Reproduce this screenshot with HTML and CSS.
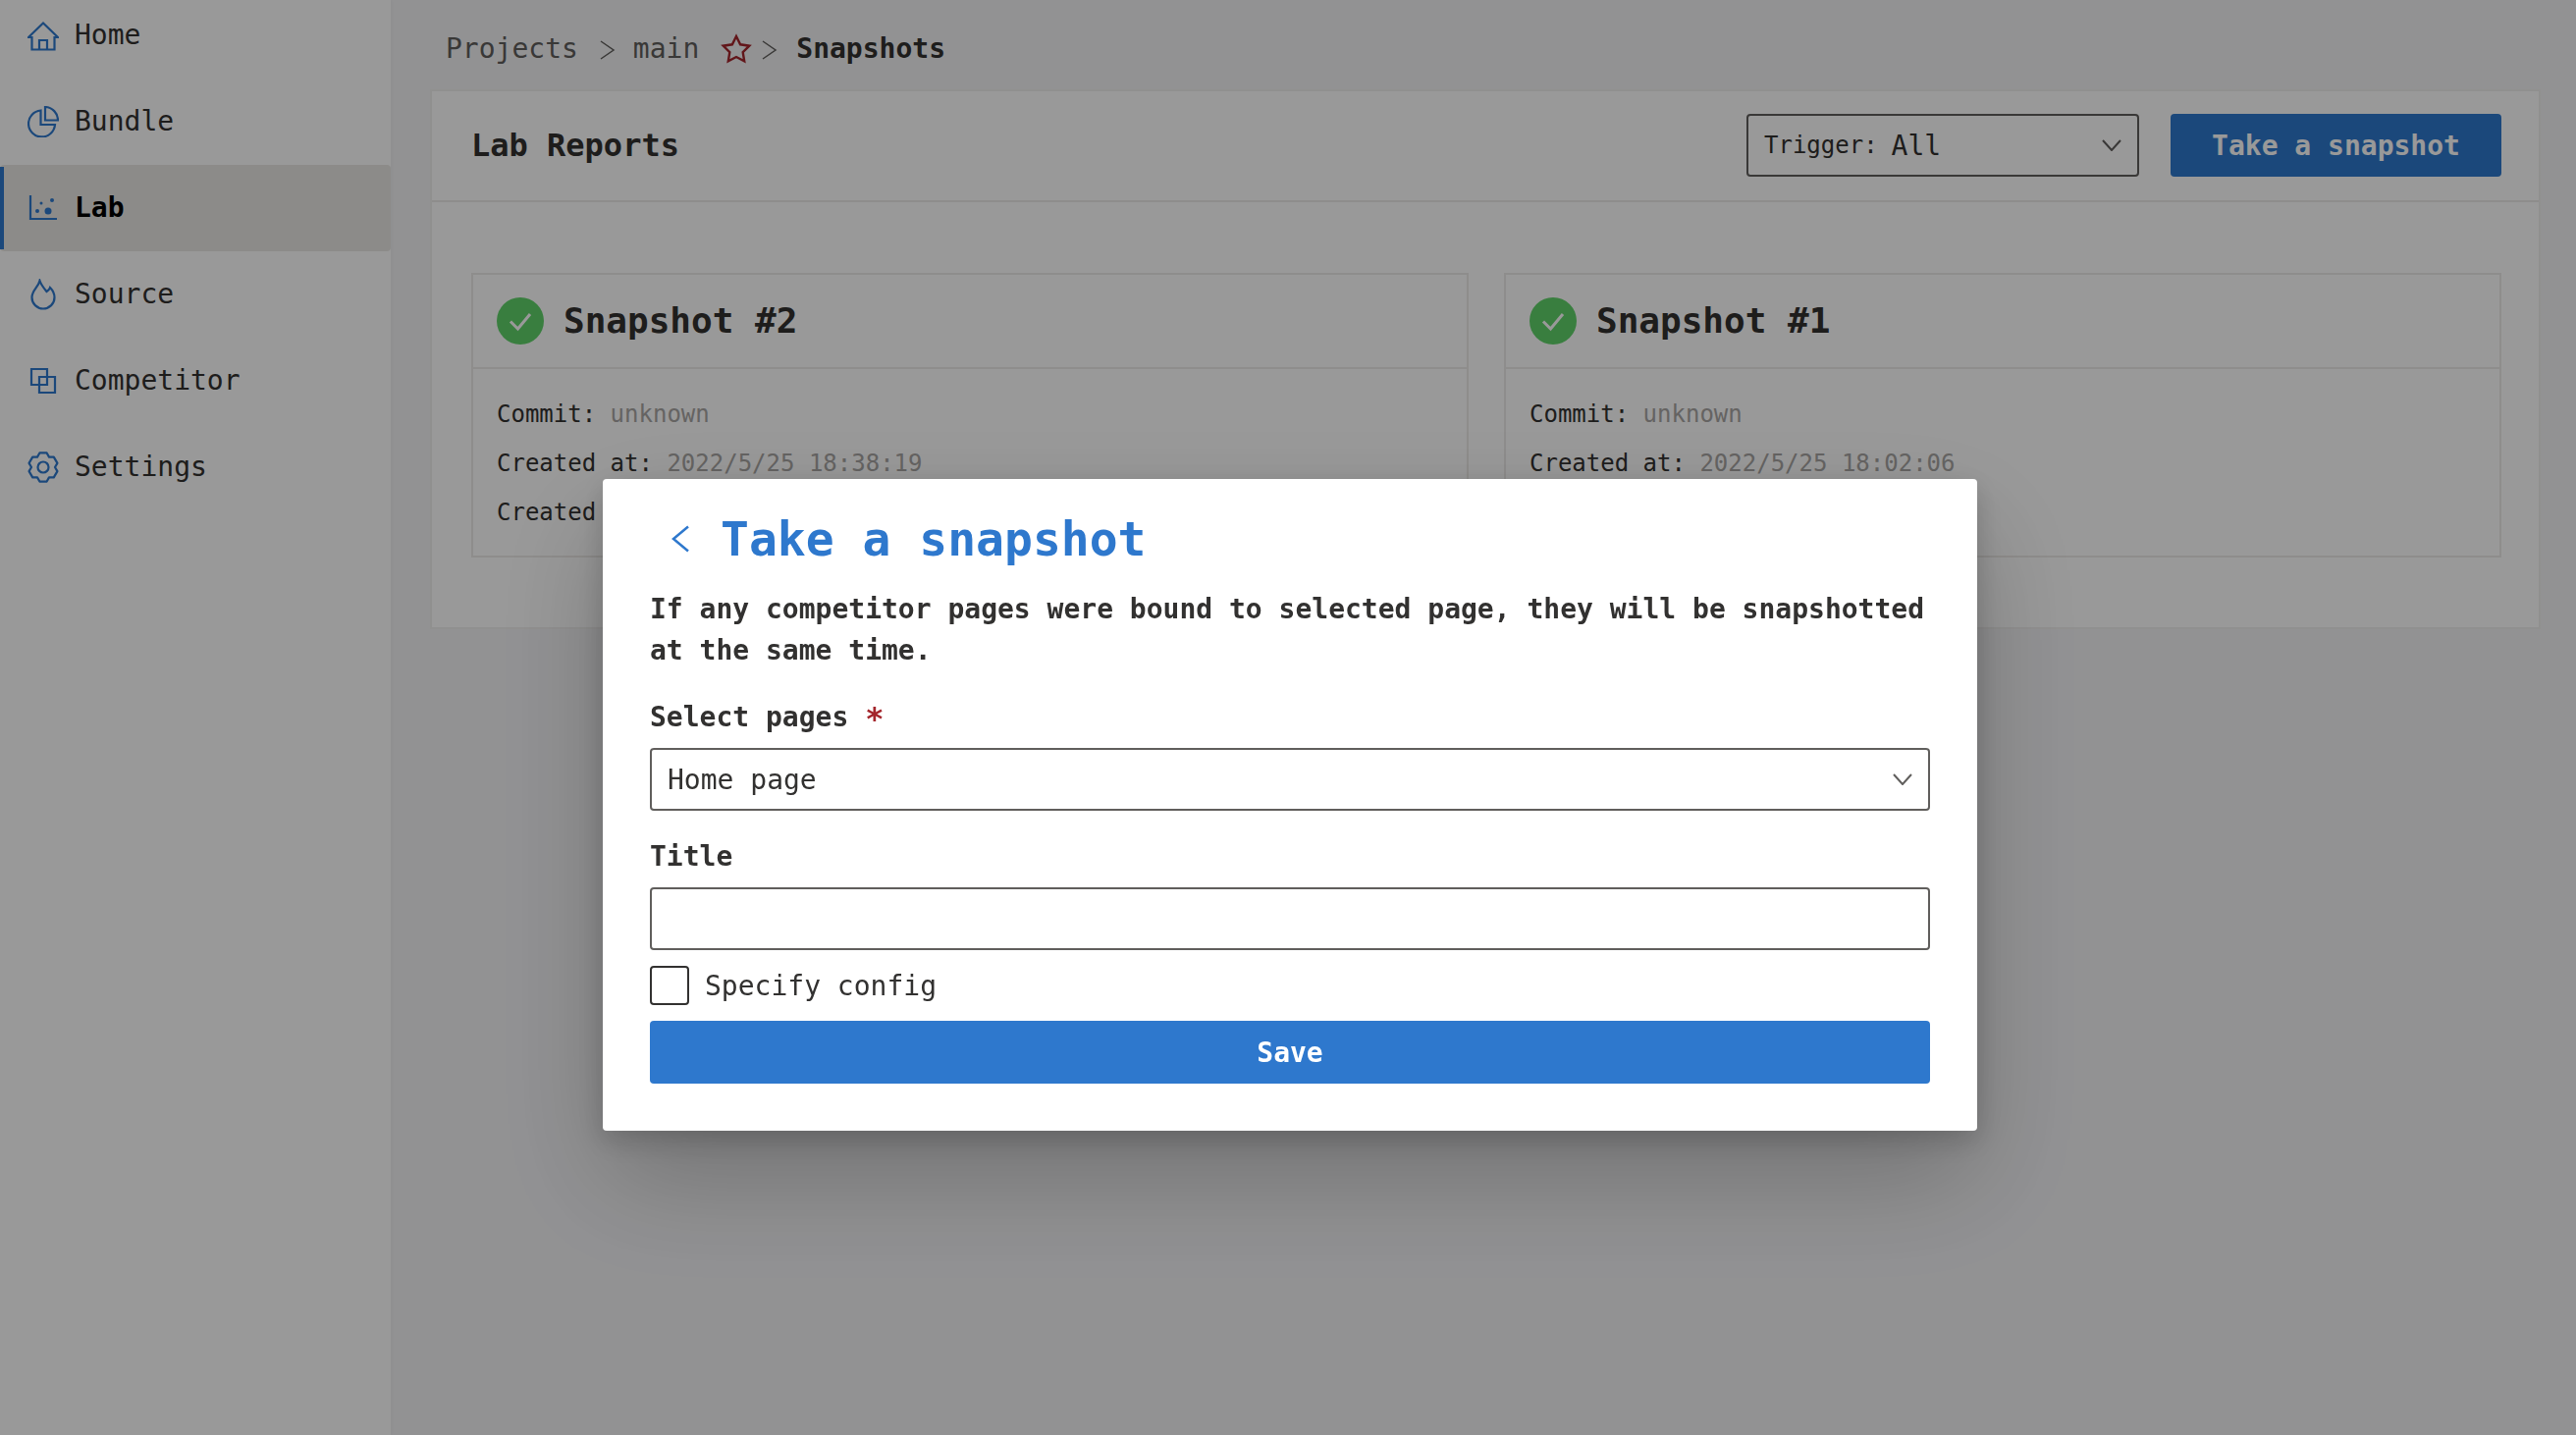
FILE: index.html
```html
<!DOCTYPE html>
<html lang="en">
<head>
<meta charset="utf-8">
<title>Lab Reports</title>
<link rel="stylesheet" href="styles.css">
</head>
<body>
<div class="app">
  <aside class="sidebar">
    <nav class="nav">
      <a class="nav-item"><svg class="nav-icon" viewBox="28 19 32 32"><path d="M32.500 37H29L44 22.500 59 37h-3.500v12.500h-23.000zM40 49.500V40h8v9.500"/></svg><span>Home</span></a>
      <a class="nav-item"><svg class="nav-icon" viewBox="28 108 32 32"><path d="M41.500 112.500a13.500 13.500 0 1 0 14.500 14.500h-14.500z"/><path d="M46 109v13.500h13a13.500 13.500 0 0 0-13-13.500z"/></svg><span>Bundle</span></a>
      <a class="nav-item nav-item-active"><svg class="nav-icon" viewBox="28 196 32 32"><path d="M31 199v24h27"/><circle class="dot" cx="38" cy="215" r="2"/><circle class="dot" cx="49" cy="215" r="3.500"/><circle class="dot" cx="42" cy="207" r="1.500"/><circle class="dot" cx="53" cy="204" r="2"/></svg><span>Lab</span></a>
      <a class="nav-item"><svg class="nav-icon" viewBox="28 284 32 32"><path d="M40.500 286c1.500 4.500 4.500 8 7 11 1.500-1 3-2.500 3.500-4 3 3 4.500 7 4.500 10a11.500 11.500 0 0 1-23 0c0-7 6.500-10.500 8-17z"/></svg><span>Source</span></a>
      <a class="nav-item"><svg class="nav-icon" viewBox="28 372 32 32"><path d="M32 376h16v16H32zM40 384h16v16H40z"/></svg><span>Competitor</span></a>
      <a class="nav-item"><svg class="nav-icon" viewBox="-16 -16 32 32"><polygon stroke-linejoin="round" points="-3.630,-14.550 3.630,-14.550 6,-10.390 10.790,-10.420 14.420,-4.130 12,0 14.420,4.130 10.790,10.420 6,10.390 3.630,14.550 -3.630,14.550 -6,10.390 -10.790,10.420 -14.420,4.130 -12,0 -14.420,-4.130 -10.790,-10.420 -6,-10.390"/><circle r="5.500"/></svg><span>Settings</span></a>
    </nav>
  </aside>
  <main class="main">
    <div class="crumbs">
      <span class="crumb">Projects</span>
      <svg class="crumb-sep" viewBox="0 0 16 20"><path d="M1 1l13 9-13 9"/></svg>
      <span class="crumb">main</span>
      <svg class="star" viewBox="0 0 32 32"><polygon points="16,3 20.100,11.300 29.300,12.700 22.700,19.200 24.200,28.300 16,24 7.800,28.300 9.300,19.200 2.700,12.700 11.900,11.300"/></svg>
      <svg class="crumb-sep crumb-sep-tight" viewBox="0 0 16 20"><path d="M1 1l13 9-13 9"/></svg>
      <span class="crumb crumb-current">Snapshots</span>
    </div>
    <section class="panel">
      <header class="panel-head">
        <h1 class="panel-title">Lab Reports</h1>
        <div class="trigger">
          <span class="trigger-label">Trigger:</span>
          <span class="trigger-value">All</span>
          <svg class="chevron" viewBox="0 0 20 12"><path d="M1 1l9 10 9-10"/></svg>
        </div>
        <button class="btn btn-head" type="button">Take a snapshot</button>
      </header>
      <div class="cards">
        <article class="card">
          <div class="card-head">
            <svg class="check" viewBox="0 0 48 48"><circle cx="24" cy="24" r="24"/><path d="M14 24.500l7.500 7.500L34 17"/></svg>
            <h2 class="card-title">Snapshot #2</h2>
          </div>
          <div class="card-body">
            <p class="row">Commit: <span class="muted">unknown</span></p>
            <p class="row">Created at: <span class="muted">2022/5/25 18:38:19</span></p>
            <p class="row">Created by:</p>
          </div>
        </article>
        <article class="card">
          <div class="card-head">
            <svg class="check" viewBox="0 0 48 48"><circle cx="24" cy="24" r="24"/><path d="M14 24.500l7.500 7.500L34 17"/></svg>
            <h2 class="card-title">Snapshot #1</h2>
          </div>
          <div class="card-body">
            <p class="row">Commit: <span class="muted">unknown</span></p>
            <p class="row">Created at: <span class="muted">2022/5/25 18:02:06</span></p>
            <p class="row">Created by:</p>
          </div>
        </article>
      </div>
    </section>
  </main>
</div>
<div class="overlay">
  <div class="modal">
    <div class="modal-head">
      <svg class="back" viewBox="0 0 18 28"><path d="M17 1.500L2 14l15 12.500"/></svg>
      <h2 class="modal-title">Take a snapshot</h2>
    </div>
    <p class="modal-desc">If any competitor pages were bound to selected page, they will be snapshotted at the same time.</p>
    <label class="field-label field-label-first">Select pages <span class="req">*</span></label>
    <div class="select">
      <span>Home page</span>
      <svg class="chevron" viewBox="0 0 20 12"><path d="M1 1l9 10 9-10"/></svg>
    </div>
    <label class="field-label">Title</label>
    <input class="text-input" type="text">
    <label class="checkline"><span class="checkbox"></span><span>Specify config</span></label>
    <button class="btn btn-save" type="button">Save</button>
  </div>
</div>
</body>
</html>
```
FILE: styles.css
```css
* { box-sizing: border-box; }
html, body { margin: 0; height: 100%; overflow: hidden; }
body {
  font-family: "DejaVu Sans Mono", monospace;
  font-size: 28px;
  color: #323130;
  background: #f4f4f6;
}
.app { display: flex; height: 1462px; }

.sidebar {
  width: 398px;
  flex: none;
  background: #fff;
  box-shadow: 1px 0 4px rgba(0, 0, 0, .04);
}
.nav { margin-top: -8px; display: flex; flex-direction: column; }
.nav-item {
  position: relative;
  height: 88px;
  display: flex;
  align-items: center;
  gap: 16px;
  padding-left: 28px;
  border-radius: 4px;
}
.nav-item span { line-height: 88px; }
.nav-icon {
  width: 32px;
  height: 32px;
  flex: none;
  fill: none;
  stroke: #2e78cd;
  stroke-width: 2.200;
}
.nav-icon .dot { fill: #2e78cd; stroke: none; }
.nav-item-active { background: #e9e8e4; font-weight: 700; color: #000; }
.nav-item-active::before {
  content: "";
  position: absolute;
  left: 0;
  top: 2px;
  bottom: 2px;
  width: 4px;
  background: #2e78cd;
}

.main { flex: 1; min-width: 0; padding: 0 36px 0 40px; }
.crumbs { height: 91px; padding: 9px 0 0 16px; display: flex; align-items: center; color: #605e5c; }
.crumb { line-height: 40px; }
.crumb-current { font-weight: 700; color: #323130; margin-left: 19px; }
.crumb-sep { width: 16px; height: 20px; margin: 2px 18px 0 22px; fill: none; stroke: #605e5c; stroke-width: 1.500; }
.crumb-sep-tight { margin: 2px 0 0 10px; }
.star { width: 32px; height: 32px; margin-left: 22px; fill: none; stroke: #a4262c; stroke-width: 2.400; }

.panel { background: #fff; border: 2px solid #f1f0ef; height: 550px; }
.panel-head {
  height: 113px;
  padding: 23px 38px 0 40px;
  display: flex;
  align-items: flex-start;
  border-bottom: 2px solid #edebe9;
}
.panel-title { margin: 0 auto 0 0; font-size: 32px; font-weight: 700; line-height: 64px; color: #323130; }
.trigger {
  width: 400px;
  height: 64px;
  border: 2px solid #605e5c;
  border-radius: 4px;
  display: flex;
  align-items: center;
  padding: 0 16px;
  color: #323130;
}
.trigger-label { font-size: 24px; margin-right: 14px; }
.trigger .chevron { margin-left: auto; }
.chevron { width: 20px; height: 12px; fill: none; stroke: #605e5c; stroke-width: 2; flex: none; }
.btn {
  font-family: inherit;
  font-size: 28px;
  font-weight: 700;
  height: 64px;
  border: 0;
  border-radius: 4px;
  background: #2e78cd;
  color: #fff;
  padding: 0;
}
.btn-head { width: 337px; margin-left: 32px; }

.cards {
  padding: 72px 38px 0 40px;
  display: grid;
  grid-template-columns: 1fr 1fr;
  gap: 36px;
}
.card { border: 2px solid #edebe9; height: 290px; }
.card-head {
  height: 96px;
  display: flex;
  align-items: center;
  gap: 20px;
  padding-left: 24px;
  border-bottom: 2px solid #edebe9;
}
.check { width: 48px; height: 48px; flex: none; }
.check circle { fill: #60d36a; }
.check path { fill: none; stroke: #fff; stroke-width: 3; }
.card-title { margin: 0; font-size: 36px; font-weight: 700; line-height: 48px; color: #323130; }
.card-body { padding: 21px 24px 0; }
.row { margin: 0; font-size: 24px; line-height: 50px; color: #323130; }
.muted { color: #a8a6a4; }

.overlay {
  position: fixed;
  inset: 0;
  background: rgba(0, 0, 0, .4);
}
.modal {
  position: absolute;
  left: 614px;
  top: 488px;
  width: 1400px;
  height: 664px;
  padding: 29px 48px 48px;
  background: #fff;
  border-radius: 4px;
  box-shadow: 0 51px 115px rgba(0, 0, 0, .22), 0 10px 29px rgba(0, 0, 0, .18);
  display: flex;
  flex-direction: column;
}
.modal-head { display: flex; align-items: center; height: 64px; padding-left: 22px; gap: 32px; }
.back { width: 18px; height: 28px; fill: none; stroke: #2e78cd; stroke-width: 2.500; flex: none; }
.modal-title { margin: 0; font-size: 48px; font-weight: 700; line-height: 64px; color: #2e78cd; }
.modal-desc { margin: 19px 0 0; font-weight: 700; line-height: 42px; color: #323130; }
.field-label { display: block; font-weight: 700; line-height: 42px; margin-top: 26px; margin-bottom: 10px; color: #323130; }
.field-label-first { margin-top: 26px; margin-bottom: 10px; }
.req { color: #a4262c; font-size: 32px; line-height: 0; vertical-align: -3px; }
.select {
  height: 64px;
  border: 2px solid #605e5c;
  border-radius: 4px;
  padding: 0 16px;
  display: flex;
  align-items: center;
  justify-content: space-between;
  color: #323130;
}
.text-input {
  display: block;
  width: 100%;
  height: 64px;
  border: 2px solid #605e5c;
  border-radius: 4px;
  background: #fff;
  padding: 0 16px;
  font: inherit;
  outline: 0;
}
.checkline { display: flex; align-items: center; gap: 16px; margin-top: 16px; height: 40px; color: #323130; }
.checkbox { width: 40px; height: 40px; border: 2px solid #323130; border-radius: 4px; flex: none; }
.btn-save { width: 100%; margin-top: 16px; }
```
